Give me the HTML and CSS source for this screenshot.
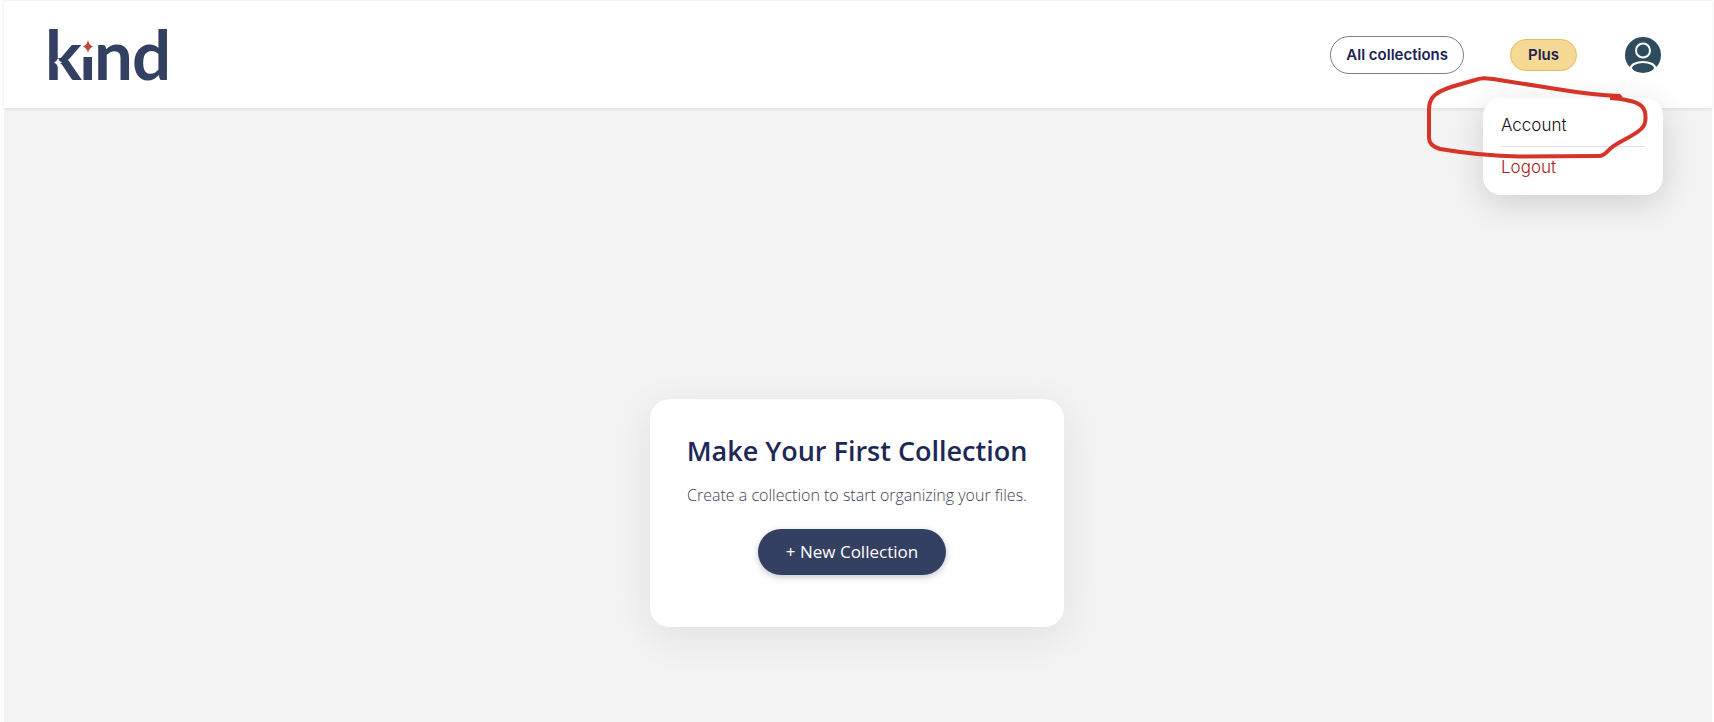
FILE: index.html
```html
<!doctype html>
<html lang="en">
<head>
  <title>Kind</title>
  <meta charset="utf-8">
  <link rel="stylesheet" href="styles.css">
</head>
<body>

<header class="header">
  <a class="logo" href="#" aria-label="kind">
    <svg width="136" height="84" viewBox="0 0 136 84">
      <text class="logo-text" x="3 37 52 90" y="67">kind</text>
      <!-- the stars on the k and over the i -->
      <rect x="39" y="13" width="14" height="31" fill="#fff"/>
      <path d="M46 27 Q47 32 51 33.500 Q47 35 46 40 Q45 35 41 33.500 Q45 32 46 27Z" fill="#c0493b"/>
      <path d="M16 45 Q17 48.500 20 49.500 Q17 50.500 16 54 Q15 50.500 12 49.500 Q15 48.500 16 45Z" fill="#fff"/>
    </svg>
  </a>

  <nav class="nav">
    <a class="collections" href="#">All collections</a>
    <a class="plan" href="#">Plus</a>
    <div class="user">
      <button class="avatar" type="button" aria-label="User menu">
        <svg width="36" height="36" viewBox="0 0 36 36">
          <circle cx="18" cy="18" r="18" fill="#2d4d5f"/>
          <circle cx="18" cy="13.500" r="7" fill="none" stroke="#fff" stroke-width="2"/>
          <ellipse cx="18" cy="31" rx="12" ry="6" fill="none" stroke="#fff" stroke-width="2"/>
          <path d="M4 30 L7 28 L7 33 L3 33Z M32 30 L29 28 L29 33 L33 33Z" fill="#fff"/>
        </svg>
      </button>
      <div class="menu">
        <a class="account" href="#">Account</a>
        <a class="logout" href="#">Logout</a>
      </div>
      <svg class="marker" width="226" height="88" viewBox="1426 72 226 88">
        <path d="M1622 95 L1621 96 C1590 95 1570 91 1545 87 L1494 79 C1484 78 1482 78 1476 80 L1452 87 C1434 93 1430 99 1430 110 L1430 138 C1430 144 1434 147 1441 149 C1465 153 1490 156 1520 156.500 L1600 156 C1606 156 1607 152 1612 148 C1622 140 1636 136 1643 128 C1647 124 1647 118 1646 112 C1644 103 1633 101 1622 99 L1611 98"/>
      </svg>
    </div>
  </nav>
</header>

<main class="content">
  <section class="card">
    <h1>Make Your First Collection</h1>
    <p>Create a collection to start organizing your files.</p>
    <button class="new" type="button">+ New Collection</button>
  </section>
</main>

</body>
</html>
```
FILE: styles.css
```css
* {
  box-sizing: border-box;
}

body {
  margin: 0;
  padding: 0 2px 0 4px;
  min-height: 100vh;
  display: flex;
  flex-direction: column;
  background: #fff;
  color: #1c2856;
  font-family: "Open Sans", sans-serif;
  font-size: 16px;
}

a {
  text-decoration: none;
}

button {
  border: 0;
  font-family: inherit;
  cursor: pointer;
}

.header {
  position: relative;
  display: flex;
  align-items: center;
  justify-content: space-between;
  height: 108px;
  padding: 0 51px 0 38px;
  background: #fff;
  border-top: 1px solid #f3f3f3;
  box-shadow: 0 1px 4px rgba(0, 0, 0, 0.09);
}

.logo svg {
  display: block;
  overflow: visible;
}

.logo-text {
  font-family: Lato, sans-serif;
  font-size: 69px;
  font-weight: bold;
  fill: #344062;
}

.nav {
  display: flex;
  align-items: center;
  font-family: Inter, sans-serif;
  font-size: 15px;
  font-weight: 600;
}

.collections {
  padding: 8px 15px;
  line-height: 20px;
  color: #1c2156;
  border: 1px solid #79809a;
  border-radius: 20px;
}

.plan {
  margin: 0 48px 0 46px;
  padding: 5px 17px;
  line-height: 20px;
  color: #1c2156;
  background: #f5d994;
  border: 1px solid #e2c064;
  border-radius: 16px;
}

.user {
  position: relative;
}

.avatar {
  display: block;
  padding: 0;
  background: none;
}

.avatar svg {
  display: block;
}

.menu {
  position: absolute;
  top: 61px;
  right: -2px;
  width: 180px;
  padding: 8px 18px;
  background: #fff;
  border-radius: 18px;
  box-shadow: 0 8px 32px rgba(0, 0, 0, 0.15);
  font-size: 17px;
  font-weight: 300;
}

.menu a {
  display: block;
  line-height: 40px;
}

.menu .account {
  padding-bottom: 2px;
  line-height: 38px;
  color: #111;
  border-bottom: 1px solid #e0e0ea;
}

.logout {
  color: #a82020;
}

.marker {
  position: absolute;
  top: 35px;
  right: 10px;
  pointer-events: none;
}

.marker path {
  fill: none;
  stroke: #d63428;
  stroke-width: 4;
  stroke-linejoin: round;
}

.content {
  flex: 1;
  padding: 291px 22px 40px 20px;
  background: #f3f3f3;
}

.card {
  max-width: 414px;
  margin: 0 auto;
  padding: 32px 24px 52px;
  text-align: center;
  background: #fff;
  border-radius: 20px;
  box-shadow: 0 10px 40px rgba(0, 0, 0, 0.08);
}

.card h1 {
  margin: 0 0 14px;
  font-size: 27px;
  font-weight: 600;
  line-height: 40px;
}

.card p {
  margin: 0 0 24px;
  font-weight: 300;
  line-height: 20px;
  color: #3c4257;
}

.new {
  margin-right: 10px;
  padding: 0 28px;
  font-size: 17px;
  line-height: 46px;
  color: #fff;
  background: #344062;
  border-radius: 23px;
  box-shadow: 0 2px 6px rgba(52, 64, 98, 0.3);
}
```
